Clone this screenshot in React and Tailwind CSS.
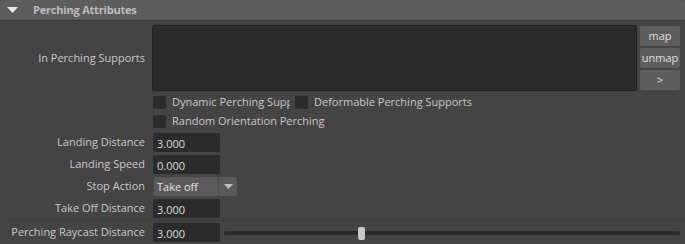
export default function App() {
  const font = { fontFamily: '"Open Sans", "Liberation Sans", sans-serif' };
  const Field = ({ v }) => (
    <div className="w-[67px] h-[19px] bg-[#2b2b2b] rounded-[2px] text-[#dcdcdc] text-[11px] leading-[19px] pl-[4px] pt-[1px]">{v}</div>
  );
  const Label = ({ children }) => (
    <div className="w-[146px] shrink-0 text-right pr-[1px] text-[#c8c8c8] text-[11px] whitespace-nowrap">{children}</div>
  );
  const Check = ({ children, w, tw }) => (
    <div className={`flex items-center gap-[6px] ${w || ''}`}>
      <div className="w-[13px] h-[13px] bg-[#2b2b2b] rounded-[2px] shrink-0" />
      <span className={`text-[#c8c8c8] text-[11px] whitespace-nowrap overflow-hidden ${tw || ''}`}>{children}</span>
    </div>
  );
  return (
    <div className="w-[685px] h-[244px] bg-[#444444] overflow-hidden" style={font}>
      <div className="h-[20px] bg-[#5d5d5d] rounded-t-[3px] flex items-center border-b border-[#3a3a3a] box-content">
        <svg width="11" height="6" viewBox="0 0 11 6" className="ml-[7px]">
          <polygon points="0,0 11,0 5.5,6" fill="#e8e8e8" />
        </svg>
        <span className="ml-[15px] text-[11px] font-bold tracking-[-0.2px] text-[#bdbdbd]">Perching Attributes</span>
      </div>
      <div className="flex flex-col">
        <div className="flex items-center mt-[4px]">
          <Label>In Perching Supports</Label>
          <div className="ml-[6px] w-[485px] h-[66px] bg-[#2b2b2b] border border-[#222222] rounded-[2px]" />
          <div className="ml-[3px] flex flex-col gap-[2px]">
            <div className="w-[40px] h-[20px] bg-[#5d5d5d] rounded-[2px] text-[#e0e0e0] text-[11px] flex items-center justify-center">map</div>
            <div className="w-[40px] h-[20px] bg-[#5d5d5d] rounded-[2px] text-[#e0e0e0] text-[11px] flex items-center justify-center">unmap</div>
            <div className="w-[40px] h-[20px] bg-[#5d5d5d] rounded-[2px] text-[#e0e0e0] text-[11px] flex items-center justify-center">&gt;</div>
          </div>
        </div>
        <div className="flex items-center mt-[4px] ml-[153px] h-[14px]">
          <Check w="w-[142px]" tw="max-w-[118px]">Dynamic Perching Supports</Check>
          <Check>Deformable Perching Supports</Check>
        </div>
        <div className="flex items-center mt-[5px] ml-[153px] h-[14px]">
          <Check>Random Orientation Perching</Check>
        </div>
        <div className="flex flex-col gap-[3px] mt-[5px]">
          <div className="flex items-center gap-[7px]"><Label>Landing Distance</Label><Field v="3.000" /></div>
          <div className="flex items-center gap-[7px]"><Label>Landing Speed</Label><Field v="0.000" /></div>
          <div className="flex items-center gap-[7px]">
            <Label>Stop Action</Label>
            <div className="ml-[1px] w-[83px] h-[19px] bg-[#5a5a5a] rounded-[2px] flex">
              <div className="w-[65px] border-r border-[#4a4a4a] text-[#e6e6e6] text-[11px] leading-[19px] pl-[3px]">Take off</div>
              <div className="flex-1 flex items-center justify-center">
                <svg width="9" height="5" viewBox="0 0 9 5"><polygon points="0,0 9,0 4.5,5" fill="#bdbdbd" /></svg>
              </div>
            </div>
          </div>
          <div className="flex items-center gap-[7px]"><Label>Take Off Distance</Label><Field v="3.000" /></div>
        </div>
        <div className="ml-[4px] h-px bg-[#3c3c3c] mt-[2px]" />
        <div className="flex items-center gap-[7px] mt-[2px]">
          <Label>Perching Raycast Distance</Label>
          <Field v="3.000" />
          <div className="relative ml-[-3px] w-[456px] h-[14px] flex items-center">
            <div className="w-full h-[4px] bg-[#2b2b2b] rounded-full" />
            <div className="absolute left-[134px] top-[1px] w-[7px] h-[13px] bg-[#c8c8c8] rounded-[2px]" />
          </div>
        </div>
      </div>
    </div>
  );
}
